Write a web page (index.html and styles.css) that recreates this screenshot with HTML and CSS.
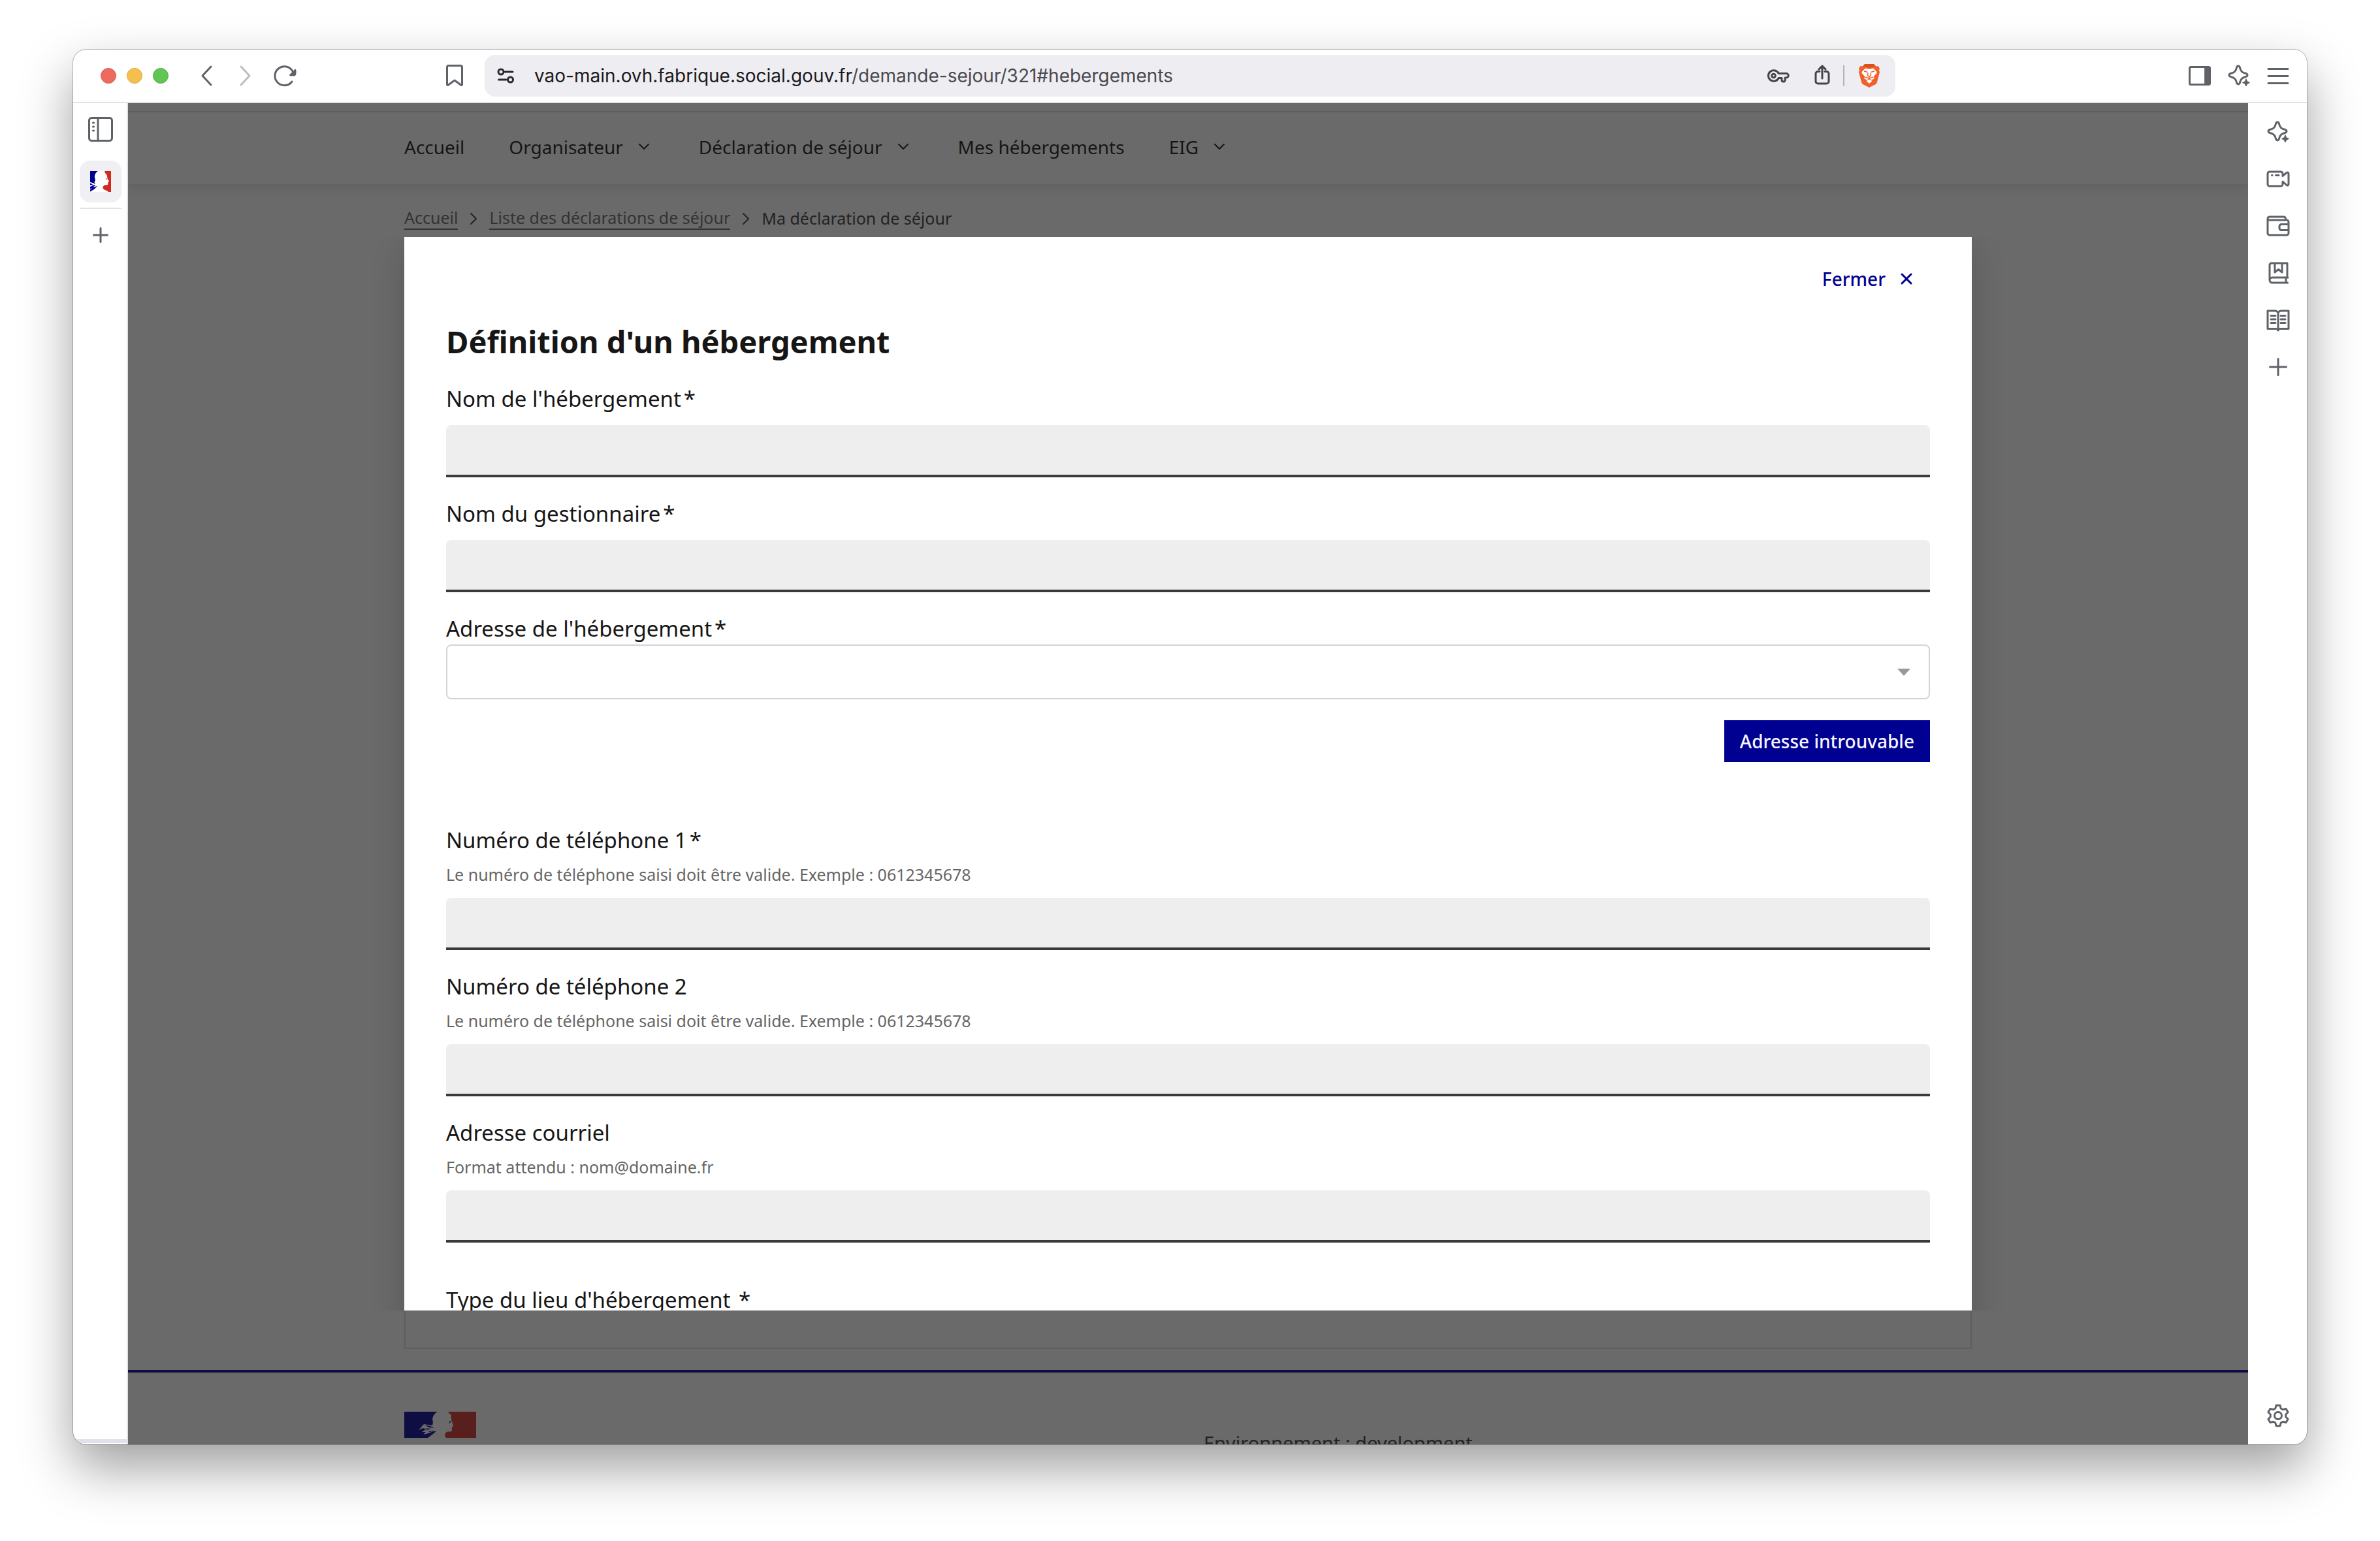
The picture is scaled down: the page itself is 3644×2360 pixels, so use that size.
FILE: index.html
```html
<!DOCTYPE html>
<html lang="fr">
<head>
<meta charset="utf-8">
<title>Ma déclaration de séjour</title>
<link rel="stylesheet" href="styles.css">
</head>
<body>
<svg class="sprite" aria-hidden="true">
  <symbol id="sparkle" viewBox="0 0 40 40">
    <path d="M19 5c1.700 0 2.300 1.300 2.700 3.200 1 4.600 3.500 7.100 8.100 8.100 1.900.4 3.200 1 3.200 2.700s-1.300 2.300-3.200 2.700c-4.600 1-7.100 3.500-8.100 8.100-.4 1.900-1 3.200-2.700 3.200s-2.300-1.300-2.700-3.200c-1-4.600-3.500-7.100-8.100-8.100C6.300 21.300 5 20.700 5 19s1.300-2.300 3.200-2.700c4.600-1 7.100-3.500 8.100-8.100C16.700 6.300 17.300 5 19 5z"/>
    <path class="solid" d="M31 25l1.800 3.700 3.700 1.800-3.700 1.800L31 36l-1.800-3.700-3.700-1.800 3.700-1.800z"/>
  </symbol>
  <symbol id="chevron-down" viewBox="0 0 32 32"><path d="M9 12l7 7 7-7"/></symbol>
  <symbol id="chevron-right" viewBox="0 0 32 32"><path d="M12 9l8 8-8 8"/></symbol>
</svg>

<div class="window">
  <header class="toolbar">
    <div class="toolbar-start">
      <div class="lights"><span class="light red"></span><span class="light amber"></span><span class="light green"></span></div>
      <button class="tool" aria-label="Précédent"><svg class="icon" viewBox="0 0 40 40"><path d="M27 6L14 20l13 14"/></svg></button>
      <button class="tool dim" aria-label="Suivant"><svg class="icon" viewBox="0 0 40 40"><path d="M13 6l13 14-13 14"/></svg></button>
      <button class="tool" aria-label="Recharger"><svg class="icon" viewBox="0 0 40 40"><path d="M31 29A14.500 14.500 0 1 1 32 13"/><path class="solid" d="M36 10.500a1 1 0 0 1 1 1V17a3 3 0 0 1-3 3h-5.500a1 1 0 0 1-.7-1.700l7.500-7.500a1 1 0 0 1 .7-.3z"/></svg></button>
      <button class="tool bookmark" aria-label="Ajouter un favori"><svg class="icon" viewBox="0 0 40 40"><path d="M11 4.500h18a2.500 2.500 0 0 1 2.500 2.500v26.500a1 1 0 0 1-1.600.8L20 27l-9.900 7.300a1 1 0 0 1-1.600-.8V7A2.500 2.500 0 0 1 11 4.500z"/></svg></button>
    </div>
    <div class="address">
      <svg class="icon site" viewBox="0 0 32 32"><circle cx="9" cy="10" r="4"/><path d="M15 10h12"/><circle cx="23.500" cy="22" r="4"/><path d="M5.500 22H17"/></svg>
      <div class="url" role="textbox" aria-label="Adresse">vao-main.ovh.fabrique.social.gouv.fr<span class="path">/demande-sejour/321#hebergements</span></div>
      <svg class="icon key" viewBox="0 0 40 40"><path d="M21.300 16.500a8.300 8.300 0 1 0 0 7H26V26.500a2.600 2.600 0 0 0 5.200 0V23H33a3.200 3.200 0 0 0 0-6.500z"/><circle cx="13.500" cy="20" r="2.800"/></svg>
      <svg class="icon share" viewBox="0 0 40 40"><path d="M16 13.500h-2.500A3.500 3.500 0 0 0 10 17v11.500a3.500 3.500 0 0 0 3.500 3.500h13a3.500 3.500 0 0 0 3.500-3.500V17a3.500 3.500 0 0 0-3.500-3.500H24M20 24V5M15 10l5-5 5 5"/></svg>
      <span class="bar"></span>
      <svg class="brave" viewBox="0 0 48 48">
        <path fill="#f0602a" d="M17 6h14l3.500 3.500 3-.5 2.500 4-1 3 1 2.500-4 15c-.5 2-1.500 3-3 4L24 42l-9-4.500c-1.500-1-2.500-2-3-4l-4-15L9 16l-1-3 2.500-4 3 .5z"/>
        <path fill="#d9501f" d="M17 6h14l2 4-9 1.500L15 10z"/>
        <path fill="#fff" d="M18 12.500l6 1.500 6-1.500 5 5c.8 1 .7 2 0 3l-4 4.500.5 3.500-4 2-3.500-2.500-3.500 2.500-4-2 .5-3.500-4-4.500c-.7-1-.8-2 0-3zM19.500 32l4.500-2.500 4.500 2.500-4.500 4z"/>
        <path fill="none" stroke="#f0602a" stroke-width="1.500" d="M16 17l5.500 1.500M32 17l-5.500 1.500M22 19.500l-.5 4 2.500 2 2.500-2-.5-4M24 25.500V30M17.500 26l6.500 2 6.500-2"/>
      </svg>
    </div>
    <div class="toolbar-end">
      <button class="tool" aria-label="Panneau latéral"><svg class="icon" viewBox="0 0 40 40"><rect x="4.500" y="6.500" width="31" height="27" rx="2"/><path class="solid" d="M28 7h7v26h-7z"/></svg></button>
      <button class="tool" aria-label="Assistant"><svg class="icon"><use href="#sparkle"/></svg></button>
      <button class="tool" aria-label="Menu"><svg class="icon" viewBox="0 0 40 40"><path d="M5 9.500h30M5 20.500h30M5 31.500h30"/></svg></button>
    </div>
  </header>

  <div class="body">
    <aside class="tabs">
      <button class="tab" aria-label="Onglets"><svg class="icon" viewBox="0 0 40 40"><rect x="2.500" y="2.500" width="35" height="35" rx="4"/><path d="M16 3v34"/><path class="dots" d="M8.500 10h1M8.500 16h1M8.500 22h1"/></svg></button>
      <button class="tab current" aria-label="Ma déclaration de séjour">
        <svg class="favicon" viewBox="0 0 32 32">
          <path fill="#fff" d="M0 0h32v32H0z"/>
          <path fill="#000091" d="M0 0h12C8.500 2 6.500 6 7 10l1 4-1.500 3L8 20l-4-2-4-1zM0 18.500l4.500 2L0 21.500zM0 24l6-3 2 1-4 3 7-2-5 5-6 3.500v-3l3-2-3 .5z"/>
          <path fill="#d12b20" d="M22 0h10v32h-4c-2-3-9-3-8.500-7 .3-2 1.500-3 3-3.500l4.500-.5.5-4 1.500-1-2.500-5-1-5-2.500-3z"/>
          <path fill="#777" d="M24.500 11h2l-.5 2h-1.500z"/>
        </svg>
      </button>
      <hr class="rule">
      <button class="tab" aria-label="Nouvel onglet"><svg class="icon" viewBox="0 0 40 40"><path d="M20 9.500v21M9.500 20h21"/></svg></button>
      <div class="tabs-foot"></div>
    </aside>

    <div class="viewport">
      <div class="page">
        <header class="site-header">
          <nav class="nav">
            <a href="#">Accueil</a>
            <button class="menu">Organisateur<svg class="icon small"><use href="#chevron-down"/></svg></button>
            <button class="menu">Déclaration de séjour<svg class="icon small"><use href="#chevron-down"/></svg></button>
            <a href="#">Mes hébergements</a>
            <button class="menu">EIG<svg class="icon small"><use href="#chevron-down"/></svg></button>
          </nav>
        </header>
        <main class="main">
          <nav class="crumbs" aria-label="Fil d'Ariane">
            <a href="#">Accueil</a>
            <svg class="icon small"><use href="#chevron-right"/></svg>
            <a href="#">Liste des déclarations de séjour</a>
            <svg class="icon small"><use href="#chevron-right"/></svg>
            <span>Ma déclaration de séjour</span>
          </nav>
          <div class="card"></div>
        </main>
        <footer class="footer">
          <div class="footer-grid">
            <svg class="logo" viewBox="0 0 110 40">
              <path fill="#000091" d="M0 0h51c-4 2-7 6-8 11l1 6 3 5 3 7-6 5-8 6H0z"/>
              <path fill="#fff" d="M22 28l8-9 13 2 1-5 6 4 2 8-2 2-6 0-7 3-8 2 4-4-6 0 6-4-4-2z"/>
              <path fill="#000091" d="M31 20.500l9 1.500 6 3-8-1zM31 25l10 1-9 3 4-2.500zM36 31l9-3-5 3zM27 36l10-1 8-4-6 5-4 4h-8z"/>
              <path fill="#d0302b" d="M67 0h43v40H64c-3-3-2.500-7 1-9 2-1 5 0 7-1s0-4 1-6l2-3-2.500-7-1-4L72 5l-3-2z"/>
              <path fill="#555" d="M69 14h3v2h-1.500v2H69z"/>
            </svg>
            <p class="env">Environnement : development</p>
          </div>
        </footer>
      </div>

      <div class="overlay">
        <div class="scroller">
          <section class="modal" role="dialog" aria-modal="true" aria-labelledby="modal-title">
            <div class="modal-bar">
              <button class="close" type="button">Fermer<svg class="icon small" viewBox="0 0 32 32"><path d="M9 9l14 14M23 9L9 23"/></svg></button>
            </div>
            <h1 class="title" id="modal-title">Définition d'un hébergement</h1>
            <form class="form">
              <div class="field">
                <label for="nom">Nom de l'hébergement<span class="req">*</span></label>
                <input class="input" id="nom" type="text">
              </div>
              <div class="field">
                <label for="gestionnaire">Nom du gestionnaire<span class="req">*</span></label>
                <input class="input" id="gestionnaire" type="text">
              </div>
              <div class="field address-field">
                <label for="adresse">Adresse de l'hébergement<span class="req">*</span></label>
                <div class="select-wrap">
                  <select class="select" id="adresse"><option></option></select>
                  <svg class="caret" viewBox="0 0 20 12"><path fill="#999" d="M0 0h20L10 11z"/></svg>
                </div>
              </div>
              <button class="primary" type="button">Adresse introuvable</button>
              <div class="field">
                <label for="tel1">Numéro de téléphone 1<span class="req">*</span></label>
                <p class="hint">Le numéro de téléphone saisi doit être valide. Exemple : 0612345678</p>
                <input class="input" id="tel1" type="tel">
              </div>
              <div class="field">
                <label for="tel2">Numéro de téléphone 2</label>
                <p class="hint">Le numéro de téléphone saisi doit être valide. Exemple : 0612345678</p>
                <input class="input" id="tel2" type="tel">
              </div>
              <div class="field">
                <label for="courriel">Adresse courriel</label>
                <p class="hint">Format attendu : nom@domaine.fr</p>
                <input class="input" id="courriel" type="email">
              </div>
              <fieldset class="group">
                <legend>Type du lieu d'hébergement <span class="req">*</span></legend>
              </fieldset>
            </form>
          </section>
        </div>
      </div>
    </div>

    <aside class="side">
      <button class="side-button" aria-label="Assistant"><svg class="icon"><use href="#sparkle"/></svg></button>
      <button class="side-button" aria-label="Appel vidéo"><svg class="icon" viewBox="0 0 40 40"><path d="M27 15.500V12a3 3 0 0 0-3-3H7a3 3 0 0 0-3 3v16a3 3 0 0 0 3 3h17a3 3 0 0 0 3-3v-4l6 5.500c1.500 1.200 3 .5 3-1.500v-16c0-2-1.500-2.700-3-1.500z"/><path d="M10.500 14.500h.5M16.500 14.500H21"/></svg></button>
      <button class="side-button" aria-label="Portefeuille"><svg class="icon" viewBox="0 0 40 40"><path d="M4 11V31a3 3 0 0 0 3 3h26a3 3 0 0 0 3-3V14a3 3 0 0 0-3-3H4V9a3 3 0 0 1 3-3h21.500a3 3 0 0 1 3 3v2M36 17.500H25a3 3 0 0 0-3 3v3a3 3 0 0 0 3 3h11"/></svg></button>
      <button class="side-button" aria-label="Favoris"><svg class="icon" viewBox="0 0 40 40"><path d="M34 27V5H10a3 3 0 0 0-3 3v23a4 4 0 0 0 4 4h23.500M7 31a4 4 0 0 1 4-4h24M32 27v8M15 5v14l5.500-4.500L26 19V5"/></svg></button>
      <button class="side-button" aria-label="Liste de lecture"><svg class="icon" viewBox="0 0 40 40"><path d="M20 9c-1-2-2.500-3-5-3H4v27.500h12c2 0 3.500.8 4 2.500.5-1.700 2-2.500 4-2.500h12V6H25c-2.500 0-4 1-5 3zv27M9 13.500h7M9 19h7M9 24.500h7M24 13.500h7M24 19h7M24 24.500h7"/></svg></button>
      <button class="side-button" aria-label="Ajouter"><svg class="icon" viewBox="0 0 40 40"><path d="M20 7.500v25M7.500 20h25"/></svg></button>
      <button class="side-button settings" aria-label="Paramètres"><svg class="icon" viewBox="0 0 40 40"><path d="M17 4.300h6L24.200 9l3.200 1.800 4.700-1.300 3 5.300-3.400 3.400v3.600l3.400 3.400-3 5.300-4.700-1.300-3.200 1.800-1.200 4.700h-6L15.800 31l-3.200-1.800-4.700 1.300-3-5.300 3.400-3.400v-3.600l-3.400-3.400 3-5.300 4.700 1.300L15.800 9z"/><circle cx="20" cy="20" r="5.500"/></svg></button>
    </aside>
  </div>
</div>
</body>
</html>
```
FILE: styles.css
```css
* { box-sizing: border-box; }

body {
  margin: 0;
  height: 100vh;
  padding: 76px 112px 148px;
  background: #fff;
  color: #161616;
  font-family: "Noto Sans", sans-serif;
  font-size: 28px;
  line-height: 48px;
}

button, input, select {
  font: inherit;
  color: inherit;
  margin: 0;
  padding: 0;
  border: 0;
  background: none;
}

a { color: inherit; text-decoration: none; }
p { margin: 0; }
svg { display: block; flex: none; }
.sprite { position: absolute; width: 0; height: 0; }

.icon {
  width: 40px;
  height: 40px;
  fill: none;
  stroke: currentColor;
  stroke-width: 3;
  stroke-linecap: round;
  stroke-linejoin: round;
}
.icon.small { width: 32px; height: 32px; }
.solid { fill: currentColor; stroke-width: 1; }

/* Browser window */
.window {
  display: flex;
  flex-direction: column;
  height: 100%;
  overflow: hidden;
  border-radius: 20px;
  background: #fff;
  box-shadow: 0 0 0 1px rgba(0, 0, 0, .26), 0 36px 80px rgba(0, 0, 0, .38);
}

.toolbar {
  flex: none;
  display: grid;
  grid-template-columns: 1fr minmax(0, 2160px) 1fr;
  align-items: center;
  height: 82px;
  border-bottom: 2px solid #e2e1e9;
  color: #5f6368;
}
.toolbar-start, .toolbar-end, .address, .lights { display: flex; align-items: center; }
.toolbar-start { padding: 0 16px 0 42px; }
.toolbar-end { justify-content: flex-end; padding-right: 14px; }
.lights { gap: 16px; margin-right: 28px; }
.light { width: 24px; height: 24px; border-radius: 50%; }
.red { background: #ed6a5e; border: 1px solid #d95c50; }
.amber { background: #f5bf4f; border: 1px solid #dca83c; }
.green { background: #61c554; border: 1px solid #52ad45; }
.tool { display: flex; justify-content: center; width: 60px; }
.tool.dim { color: #bdbdc0; }
.bookmark { margin-left: auto; }

.address {
  height: 64px;
  padding: 0 16px;
  border-radius: 16px;
  background: #eeedf2;
  color: #45444c;
}
.site { width: 32px; height: 32px; color: #2a2930; }
.url {
  flex: 1;
  margin-left: 28px;
  color: #1b1a20;
  font-family: Inter, sans-serif;
  font-size: 28px;
}
.url .path { color: #4a4951; }
.key { margin-right: 28px; }
.share { margin-right: 12px; }
.bar { width: 2px; height: 32px; margin-right: 14px; background: #b3b2b9; }
.brave { width: 48px; height: 48px; }

.body { flex: 1; display: flex; min-height: 0; }

.tabs {
  flex: none;
  display: flex;
  flex-direction: column;
  width: 84px;
  padding-top: 8px;
  border-right: 2px solid #e2e1e9;
  color: #5f6368;
}
.tab {
  display: flex;
  align-items: center;
  justify-content: center;
  width: 64px;
  height: 64px;
  margin-left: 10px;
  border-radius: 16px;
}
.tab.current { margin-top: 16px; background: #f0eff4; }
.favicon { width: 32px; height: 32px; }
.rule { width: 64px; height: 2px; margin: 8px 0 8px 10px; border: 0; background: #e2e1e9; }
.tabs-foot { height: 6px; margin: auto 0 2px; background: #e2e1e9; }

.side {
  flex: none;
  display: flex;
  flex-direction: column;
  width: 90px;
  padding: 8px 0 8px 2px;
  color: #5f6368;
}
.side-button { display: flex; align-items: center; justify-content: center; height: 72px; }
.settings { margin-top: auto; }

/* Page under the dialog */
.viewport { position: relative; flex: 1; min-width: 0; overflow: hidden; }
.page { display: flex; flex-direction: column; height: 100%; }
.site-header {
  flex: none;
  margin-top: 12px;
  border-top: 2px solid #ddd;
  box-shadow: 0 6px 16px rgba(0, 0, 18, .12);
}
.nav, .crumbs, .card, .footer-grid { width: 100%; max-width: 2400px; margin: 0 auto; }
.nav { display: flex; align-items: center; gap: 68px; height: 110px; padding-bottom: 4px; }
.menu { display: flex; align-items: center; gap: 16px; }
.main { flex: 1; display: flex; flex-direction: column; padding: 28px 0 32px; }
.crumbs {
  display: flex;
  align-items: center;
  gap: 8px;
  height: 48px;
  color: #3a3a3a;
  font-size: 25px;
  line-height: 34px;
}
.crumbs a { color: #666; border-bottom: 2px solid #666; }
.nav .icon, .crumbs .icon { stroke-width: 2; }
.card { flex: 1; margin-top: 24px; border: 2px solid #ddd; }
.footer { flex: none; height: 114px; overflow: hidden; border-top: 4px solid #000091; }
.footer-grid { display: grid; grid-template-columns: 1fr 1fr; gap: 48px; padding-top: 60px; }
.logo { width: 110px; height: 40px; }
.env { padding-top: 24px; color: #3a3a3a; font-size: 29px; }

/* Dialog */
.overlay {
  position: absolute;
  inset: 0;
  padding: 205px 0;
  background: rgba(22, 22, 22, .64);
}
.scroller { height: 100%; overflow: hidden; }
.modal {
  max-width: 2400px;
  margin: 0 auto;
  padding: 32px 64px 64px;
  background: #fff;
  box-shadow: 0 16px 48px rgba(0, 0, 18, .16);
}
.modal-bar { display: flex; justify-content: flex-end; }
.close {
  display: flex;
  align-items: center;
  gap: 16px;
  height: 64px;
  padding: 0 20px 0 24px;
  color: #000091;
  font-weight: 500;
}
.title { margin: 32px 0 0; font-size: 47px; font-weight: 700; line-height: 64px; }

.form { display: flex; flex-direction: column; gap: 32px; padding-top: 32px; font-size: 33px; }
.field { display: flex; flex-direction: column; gap: 16px; }
.req { margin-left: 4px; }
.hint { margin-top: -8px; color: #666; font-size: 25px; line-height: 40px; }
.input {
  width: 100%;
  height: 80px;
  padding: 0 32px;
  border-bottom: 4px solid #3a3a3a;
  border-radius: 8px 8px 0 0;
  background: #eee;
}
.address-field { gap: 0; }
.select-wrap { position: relative; }
.select {
  display: block;
  width: 100%;
  height: 84px;
  padding: 0 32px;
  border: 2px solid #d1d5db;
  border-radius: 8px;
  background: #fff;
  appearance: none;
}
.caret { position: absolute; top: 37px; right: 30px; width: 20px; height: 12px; }
.primary {
  align-self: flex-end;
  height: 64px;
  margin-bottom: 64px;
  padding: 0 24px;
  background: #000091;
  color: #f5f5fe;
  font-size: 28px;
  font-weight: 500;
}
.group { margin: 32px 0 0; padding: 0; border: 0; }
.group legend { padding: 0; }
```
